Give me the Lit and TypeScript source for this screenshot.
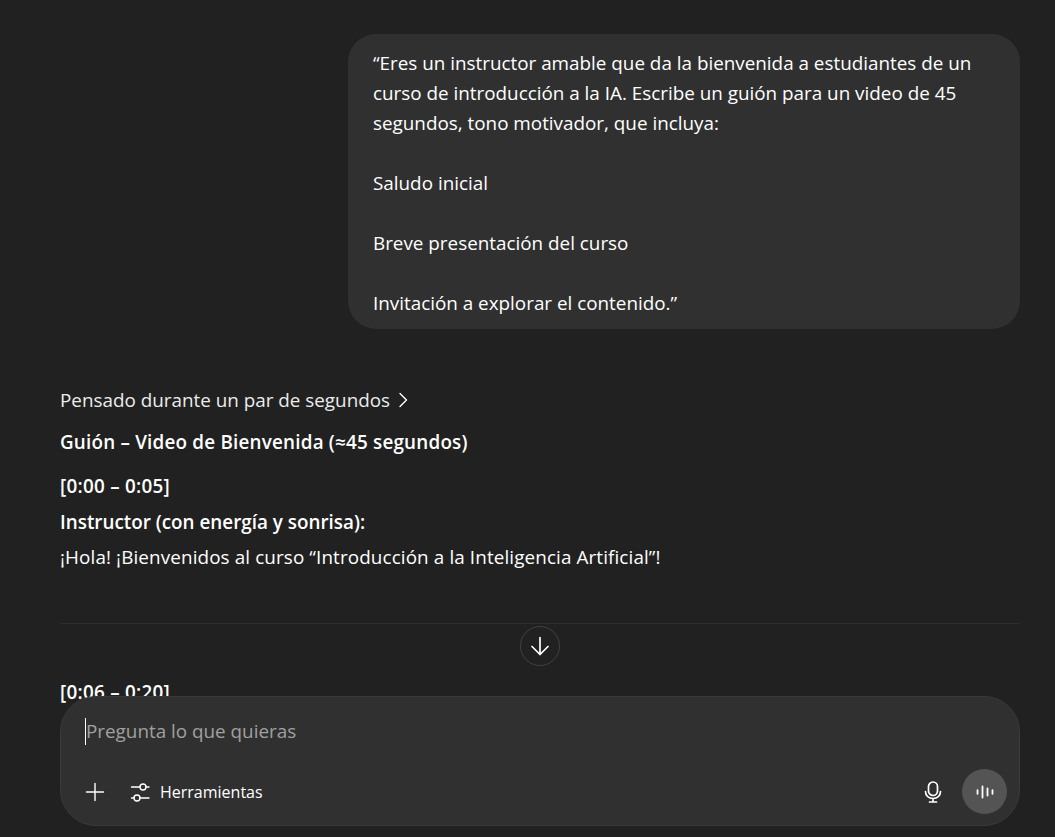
import { LitElement, html, css } from 'lit'
import { customElement } from 'lit/decorators.js'

@customElement('app-root')
export class AppRoot extends LitElement {
  static styles = css`
    :host {
      display: block;
      position: relative;
      height: 837px;
      overflow: hidden;
      background: #212121;
      color: #fff;
      font-family: "Open Sans", "Noto Sans", sans-serif;
      font-size: 18.85px;
    }

    .thread {
      display: flex;
      flex-direction: column;
      padding: 34px 35px 0 60px;
    }

    .bubble {
      align-self: flex-end;
      box-sizing: border-box;
      width: 672px;
      margin: 0;
      padding: 14px 25px 11px;
      border-radius: 28px;
      background: #303030;
      line-height: 30px;
      white-space: pre-line;
    }

    .thought {
      display: flex;
      align-items: center;
      gap: 8px;
      margin-top: 56px;
      height: 30px;
      color: #ececec;
    }

    .title, .line {
      margin: 0;
      line-height: 36px;
    }

    .title { margin-top: 9px; font-weight: 600; letter-spacing: 0.2px; }
    .stamp { margin-top: 8px; letter-spacing: 0.27px; }
    .bold { font-weight: 600; }
    .greeting { margin-top: -1px; letter-spacing: 0.115px; }

    .rule {
      height: 1px;
      margin-top: 48px;
      background: #2f2f2f;
    }

    .next { margin-top: 50px; }

    .scroll-down {
      position: absolute;
      left: 520px;
      top: 626px;
      box-sizing: border-box;
      width: 40px;
      height: 40px;
      display: flex;
      align-items: center;
      justify-content: center;
      border: 1px solid #414141;
      border-radius: 50%;
      background: #212121;
    }

    .composer {
      position: absolute;
      left: 60px;
      top: 696px;
      box-sizing: border-box;
      width: 960px;
      height: 130px;
      display: flex;
      flex-direction: column;
      justify-content: space-between;
      padding: 19px 12px 11px 24px;
      border: 1px solid #3a3a3a;
      border-radius: 36px;
      background: #303030;
    }

    .input {
      display: flex;
      align-items: center;
      height: 30px;
      color: #a0a0a0;
    }

    .caret {
      width: 1px;
      height: 27px;
      background: #fff;
    }

    .tools {
      display: flex;
      align-items: center;
    }

    .tools-label {
      margin-left: 10px;
      font-size: 16px;
    }

    .gear { margin-left: 25px; }
    .spacer { flex: 1; }

    .voice {
      width: 45px;
      height: 45px;
      margin-left: 19px;
      display: flex;
      align-items: center;
      justify-content: center;
      border-radius: 50%;
      background: #545454;
    }

    svg {
      display: block;
      fill: none;
      stroke: #fff;
      stroke-linecap: round;
      stroke-linejoin: round;
    }
  `

  render() {
    return html`
      <div class="thread">
        <p class="bubble">“Eres un instructor amable que da la bienvenida a estudiantes de un
curso de introducción a la IA. Escribe un guión para un video de 45
segundos, tono motivador, que incluya:

Saludo inicial

Breve presentación del curso

Invitación a explorar el contenido.”</p>
        <div class="thought">
          Pensado durante un par de segundos
          <svg width="10" height="16" viewBox="0 0 10 16" stroke-width="1.4"><path d="M2 1.5l6.5 6.5-6.5 6.5" /></svg>
        </div>
        <p class="title">Guión – Video de Bienvenida (≈45 segundos)</p>
        <p class="line bold stamp">[0:00 – 0:05]</p>
        <p class="line bold">Instructor (con energía y sonrisa):</p>
        <p class="line greeting">¡Hola! ¡Bienvenidos al curso “Introducción a la Inteligencia Artificial”!</p>
        <div class="rule"></div>
        <p class="line bold stamp next">[0:06 – 0:20]</p>
      </div>

      <div class="scroll-down">
        <svg width="20" height="20" viewBox="0 0 20 20" stroke-width="1.7"><path d="M10 1.5v17M2 10.5l8 8 8-8" /></svg>
      </div>

      <div class="composer">
        <div class="input"><span class="caret"></span>Pregunta lo que quieras</div>
        <div class="tools">
          <svg width="20" height="20" viewBox="0 0 20 20" stroke-width="1.4"><path d="M10 1.5v17M1.5 10h17" /></svg>
          <svg class="gear" width="20" height="20" viewBox="0 0 20 20" stroke-width="1.4">
            <path d="M1.5 5H10M16 5h3M1.5 16H4M10 16h9" />
            <circle cx="13" cy="5" r="3" />
            <circle cx="7" cy="16" r="3" />
          </svg>
          <span class="tools-label">Herramientas</span>
          <span class="spacer"></span>
          <svg width="20" height="22" viewBox="0 0 20 22" stroke-width="1.7">
            <rect x="5.5" y="1" width="9" height="13.5" rx="4.5" />
            <path d="M2.5 10.5c0 4 3 7 7.5 7s7.5-3 7.5-7M10 17.5V21M6.5 21h7" />
          </svg>
          <div class="voice">
            <svg width="18" height="16" viewBox="0 0 18 16" stroke-width="1.8">
              <path d="M1.5 6.2v3.6M6.5 2.5v11M11.5 4.5v7M16.5 6.2v3.6" />
            </svg>
          </div>
        </div>
      </div>
    `
  }
}
